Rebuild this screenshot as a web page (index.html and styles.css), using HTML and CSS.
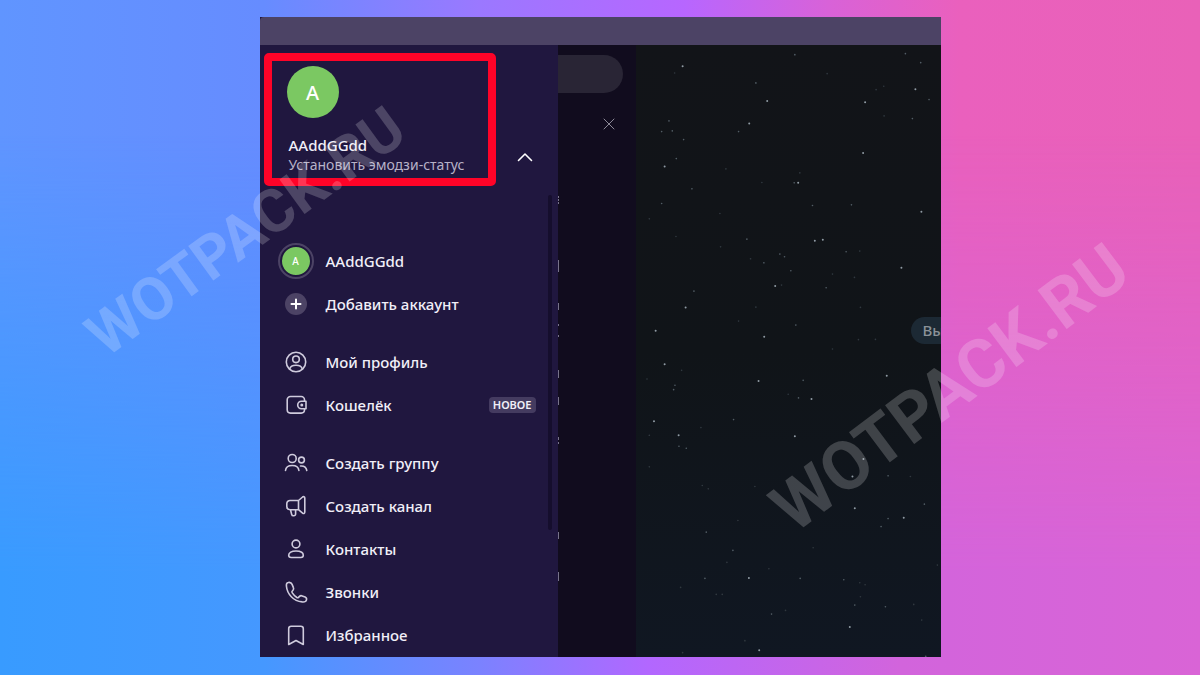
FILE: index.html
```html
<!DOCTYPE html>
<html lang="ru">
<head>
  <meta charset="UTF-8">
  <meta name="viewport" content="width=device-width, initial-scale=1.0">
  <title>Telegram</title>
  <link rel="stylesheet" href="styles.css">
</head>
<body>
  <main class="window">
    <div class="titlebar"></div>
    <div class="content">
      <aside class="drawer">
        <header class="drawer-header">
          <div class="profile">
            <div class="avatar">A</div>
            <div class="profile-name">AAddGGdd</div>
            <a class="profile-status" href="#">Установить эмодзи-статус</a>
          </div>
          <button class="toggle" type="button" aria-label="Скрыть аккаунты">
            <svg width="16" height="10" viewBox="0 0 16 10"><path d="M1.5 8.500 8 2l6.500 6.500"/></svg>
          </button>
        </header>

        <nav class="menu">
          <div class="menu-group">
            <a class="menu-item" href="#">
              <span class="icon"><span class="avatar-small">A</span></span>
              AAddGGdd
            </a>
            <a class="menu-item" href="#">
              <span class="icon"><span class="add"><svg width="22" height="22" viewBox="0 0 22 22"><path d="M11 6.500v9M6.500 11h9"/></svg></span></span>
              Добавить аккаунт
            </a>
          </div>

          <div class="menu-group">
            <a class="menu-item" href="#">
              <svg class="icon" viewBox="0 0 24 24"><circle cx="12" cy="12" r="9.700"/><circle cx="12" cy="9.300" r="3.300"/><path d="M5.700 19c.6-2.600 3-3.700 6.300-3.700s5.700 1.100 6.300 3.700"/></svg>
              Мой профиль
            </a>
            <a class="menu-item" href="#">
              <svg class="icon" viewBox="0 0 24 24"><path d="M20.500 8V6.800a3.300 3.300 0 0 0-3.300-3.300H6.500a3.300 3.300 0 0 0-3.300 3.300v10a3.300 3.300 0 0 0 3.300 3.300h10.700a3.300 3.300 0 0 0 3.300-3.300V16"/><path d="M22 8.200h-4.500a3.800 3.800 0 0 0 0 7.600H22z"/><circle cx="17.800" cy="12" r=".7"/></svg>
              Кошелёк
              <span class="badge">НОВОЕ</span>
            </a>
          </div>

          <div class="menu-group">
            <a class="menu-item" href="#">
              <svg class="icon" viewBox="0 0 24 24"><circle cx="8.200" cy="7.500" r="4"/><circle cx="17.500" cy="9" r="2.900"/><path d="M1.500 19.500c.3-3.400 2.800-5 6.700-5s6.400 1.600 6.700 5M16.500 15c3.800-.3 5.800 1.400 6.300 4.500"/></svg>
              Создать группу
            </a>
            <a class="menu-item" href="#">
              <svg class="icon" viewBox="0 0 24 24"><path d="M14.500 6.500 18.600 3c.9-.7 2.200-.3 2.200 1.100v14c0 1.400-1.300 1.800-2.200 1.100l-4.100-3.500H6a3.200 3.200 0 0 1-3.200-3.200V9.700A3.200 3.200 0 0 1 6 6.500zv9.200M6.500 15.700l1.200 4.800a1.700 1.700 0 0 0 1.700 1.300h.5a1.700 1.700 0 0 0 1.700-1.700v-4.400"/></svg>
              Создать канал
            </a>
            <a class="menu-item" href="#">
              <svg class="icon" viewBox="0 0 24 24"><circle cx="12" cy="7" r="3.900"/><path d="M12 14c-4.500 0-7.300 1.600-7.300 4.300 0 1.400.9 2.200 2.400 2.200h9.800c1.500 0 2.400-.8 2.400-2.200 0-2.700-2.800-4.300-7.300-4.300z"/></svg>
              Контакты
            </a>
            <a class="menu-item" href="#">
              <svg class="icon" viewBox="0 0 24 24"><path d="M4.200 2.500C3 2.700 2.200 4 2.400 6c.8 8.300 7 14.900 15.800 15.900 2.200.2 4-.7 4.300-2.100.3-1.200-.3-2.200-1.400-2.700l-2.900-1.200c-1-.4-2-.2-2.700.5l-1 1c-.5.500-1 .500-1.600.100-2-1.400-3.600-3-4.800-4.900-.4-.6-.3-1.100.2-1.600l.7-.8c.7-.8.800-1.700.4-2.600L8.100 4.400C7.500 2.900 6.200 2.100 4.200 2.500z"/></svg>
              Звонки
            </a>
            <a class="menu-item" href="#">
              <svg class="icon" viewBox="0 0 24 24"><path d="M4.700 21.500V5.800c0-1.600 1-2.500 2.500-2.500h9.600c1.600 0 2.500.9 2.500 2.500v15.700L12 17.500z"/></svg>
              Избранное
            </a>
          </div>
        </nav>
      </aside>

      <section class="chats">
        <input class="search" type="search" aria-label="Поиск">
        <button class="close" type="button" aria-label="Закрыть">
          <svg width="12" height="12" viewBox="0 0 12 12"><path d="m1 1 10 10M11 1 1 11"/></svg>
        </button>
        <!-- edges of the chat names left visible beside the drawer -->
        <svg class="edges" width="2" height="612"><path d="M0 151v2m0 1v2m0 1v2M0 215v12M0 258v7M0 279v2m0 9v2M0 325v8M0 352v8M0 392v3m0 2v2M0 487v7M0 527v9"/></svg>
      </section>

      <section class="chat">
        <svg class="sky">
          <g transform="translate(4 -5) scale(.333)">
            <path class="bright" d="M128 79h0M382 183h0M676 187h0M827 148h0M328 251h0M74 380h0M475 429h0M845 516h0M525 603h0M549 600h0M785 684h0M406 739h0M137 803h0M47 873h0M373 891h0M670 339h0"/>
            <path class="dim" d="M465 44h0M348 129h0M797 41h0M843 68h0M868 179h0M818 236h0M87 243h0M131 299h0M296 275h0M97 273h0M65 275h0M109 356h0M156 447h0M65 491h0M518 497h0M635 495h0M321 598h0M619 636h0M420 643h0M434 651h0M372 669h0M453 693h0M559 744h0M162 754h0M468 856h0M463 429h0"/>
            <path class="faint" d="M104 99h0M562 101h0M732 139h0M709 149h0M480 399h0M240 521h0M28 537h0M108 590h0M242 621h0M332 657h0M660 634h0M644 713h0M578 703h0M662 803h0M348 802h0M296 844h0M656 900h0M707 899h0M733 228h0M258 387h0M366 428h0M425 736h0"/>
          </g>
          <g transform="translate(4 295) scale(.333)">
            <path class="bright" d="M74 73h0M356 123h0M741 107h0M515 177h0M42 244h0M116 286h0M465 289h0M671 357h0M638 410h0M645 505h0M792 534h0M327 715h0M630 862h0M358 932h0"/>
            <path class="dim" d="M105 136h0M101 149h0M490 121h0M476 174h0M281 239h0M117 319h0M139 325h0M745 408h0M745 536h0M724 560h0M199 577h0M279 632h0M195 716h0M481 716h0M612 720h0M395 823h0M645 796h0M737 801h0M858 950h0M854 493h0"/>
            <path class="faint" d="M21 117h0M578 27h0M125 91h0M445 163h0M183 263h0M28 286h0M28 381h0M187 437h0M345 440h0M205 447h0M812 410h0M294 542h0M261 668h0M387 687h0M122 743h0M229 764h0M247 764h0M660 729h0M676 735h0M662 771h0M822 794h0M846 841h0M437 812h0M315 903h0M128 939h0M893 676h0M520 624h0"/>
          </g>
        </svg>
        <span class="hint">Вы</span>
      </section>
    </div>
  </main>

  <div class="watermark watermark-left" aria-hidden="true">WOTPACK.RU</div>
  <div class="watermark watermark-right" aria-hidden="true">WOTPACK.RU</div>
</body>
</html>
```
FILE: styles.css
```css
* {
  box-sizing: border-box;
}

body {
  position: relative;
  display: flex;
  min-height: 100vh;
  margin: 0;
  padding: 17px 0 18px;
  overflow-x: hidden;
  font-family: "Noto Sans", sans-serif;
  font-size: 15px;
  line-height: 20px;
  color: #f1eff8;
  background: linear-gradient(90deg, #6095ff, #668cff 22%, #9b78ff 40%, #b766ff 57%, #d862d8 69%, #ea60bd 80%, #e961b8);
}

/* cooler tones towards the bottom of the backdrop */
body::before {
  content: "";
  position: absolute;
  inset: 0;
  background: linear-gradient(90deg, #389bff, #4598ff 22%, #7b82ff 40%, #b267ff 54%, #d264dc 75%, #d964d6);
  -webkit-mask-image: linear-gradient(transparent 20%, #000 85%);
  mask-image: linear-gradient(transparent 20%, #000 85%);
}

a {
  color: inherit;
  text-decoration: none;
}

button {
  display: flex;
  padding: 0;
  border: none;
  background: none;
  cursor: pointer;
}

svg {
  fill: none;
  stroke: currentColor;
  stroke-linecap: round;
  stroke-linejoin: round;
}

.window {
  position: relative;
  display: flex;
  flex-direction: column;
  width: 100%;
  max-width: 681px;
  margin: 0 auto;
  background-color: #20173f;
}

.titlebar {
  height: 28px;
  border-top-left-radius: 4px;
  background-color: #4c4365;
}

.content {
  display: flex;
  flex: 1;
  overflow: hidden;
}

.drawer {
  display: flex;
  flex-direction: column;
  width: 298px;
  background-color: #20173f;
}

.drawer-header {
  display: flex;
  align-items: flex-end;
  justify-content: space-between;
  padding: 8px 25px 0 4px;
}

.profile {
  width: 232px;
  padding: 5px 15px 3px;
  border: 8px solid #ff0328;
  border-radius: 5px;
}

.avatar {
  width: 52px;
  height: 52px;
  margin-bottom: 17px;
  border-radius: 50%;
  background-color: #7bc862;
  font-size: 20px;
  font-weight: 500;
  line-height: 54px;
  text-align: center;
  color: #fff;
}

.profile-name,
.profile-status {
  display: block;
  padding-left: 2px;
  white-space: nowrap;
}

.profile-name {
  font-weight: 500;
}

.profile-status {
  font-size: 14px;
  color: #b7b2c8;
}

.toggle {
  margin-bottom: 24px;
  color: #fff;
}

.toggle svg {
  stroke-width: 1.6;
}

.menu {
  position: relative;
  display: flex;
  flex: 1;
  flex-direction: column;
  gap: 15px;
  margin-top: 9px;
  padding-top: 44px;
}

/* scrollbar thumb */
.menu::after {
  content: "";
  position: absolute;
  top: 0;
  right: 6px;
  width: 4px;
  height: 335px;
  border-radius: 2px;
  background-color: #150e2d;
}

.menu-item {
  display: flex;
  align-items: center;
  height: 43px;
  padding: 0 22px 0 24px;
  font-weight: 500;
}

.icon {
  display: flex;
  align-items: center;
  justify-content: center;
  flex: none;
  width: 24px;
  height: 24px;
  margin-right: 18px;
  color: #cfcbdd;
  stroke-width: 1.6;
}

.avatar-small {
  flex: none;
  width: 36px;
  height: 36px;
  border: 4px solid #20173f;
  border-radius: 50%;
  outline: 2px solid #4c4365;
  outline-offset: -2px;
  background-color: #7bc862;
  font-size: 10px;
  line-height: 28px;
  text-align: center;
  color: #fff;
}

.add {
  display: flex;
  border-radius: 50%;
  background-color: #4c4365;
  color: #fff;
}

.add svg {
  stroke-width: 2;
}

.badge {
  margin-left: auto;
  padding: 0 4px;
  border-radius: 4px;
  background-color: #443b60;
  font-size: 11px;
  font-weight: 600;
  line-height: 16px;
}

.chats {
  position: relative;
  display: flex;
  flex-direction: column;
  align-items: flex-end;
  width: 78px;
  padding: 10px 13px;
  background-color: #110c1e;
}

.search {
  width: 65px;
  height: 38px;
  margin-bottom: 25px;
  border: none;
  border-radius: 0 19px 19px 0;
  background-color: #292535;
  color: #8d8a98;
}

.close {
  margin-right: 8px;
  color: #8d8a98;
}

.edges {
  position: absolute;
  top: 0;
  left: 0;
  color: #77728a;
  stroke-width: 2;
  stroke-linecap: butt;
}

.chat {
  position: relative;
  display: flex;
  align-items: center;
  justify-content: flex-end;
  flex: 1;
  padding-bottom: 41px;
  overflow: hidden;
  background: linear-gradient(#121418, #101418 50%, #101722);
}

.sky {
  position: absolute;
  top: 0;
  left: 0;
  width: 100%;
  height: 100%;
}

.bright {
  stroke: #8f9aa3;
  stroke-width: 6;
}

.dim {
  stroke: #525d65;
  stroke-width: 5;
}

.faint {
  stroke: #30383f;
  stroke-width: 5;
}

.hint {
  position: relative;
  width: 50px;
  margin-right: -20px;
  padding-left: 12px;
  border-radius: 14px;
  background-color: #1c2934;
  font-weight: 500;
  line-height: 27px;
  color: #8b9299;
}

.watermark {
  position: absolute;
  font-family: Roboto, sans-serif;
  font-weight: bold;
  line-height: 1;
  color: rgba(255, 255, 255, 0.2);
  pointer-events: none;
}

.watermark-left {
  top: 232px;
  left: calc(50% - 354px);
  font-size: 60px;
  transform: translate(-50%, -50%) rotate(-36deg);
}

.watermark-right {
  top: 388px;
  left: calc(50% + 350px);
  font-size: 68px;
  transform: translate(-50%, -50%) rotate(-37deg);
}
```
